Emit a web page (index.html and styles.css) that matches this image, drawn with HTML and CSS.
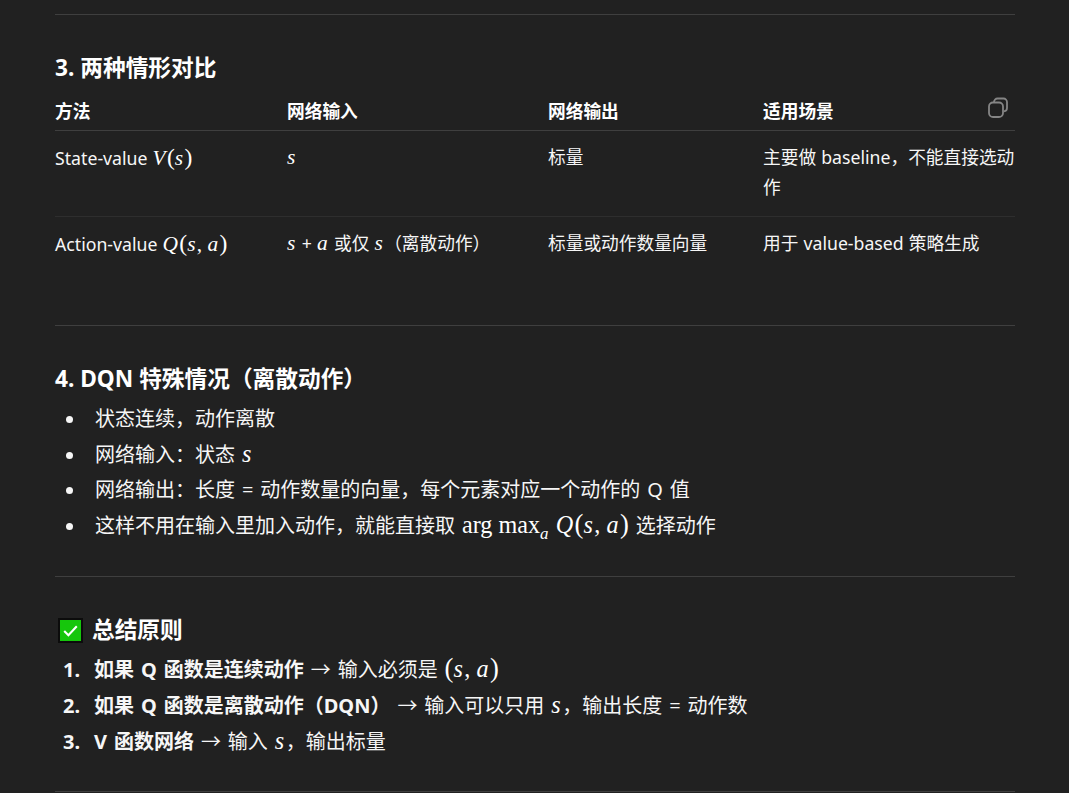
FILE: index.html
```html
<!DOCTYPE html>
<html lang="zh-CN">
<head>
<meta charset="utf-8">
<title>两种情形对比</title>
<link rel="stylesheet" href="styles.css">
</head>
<body>
<main class="doc">
  <hr class="rule first">
  <h3 class="title">3. 两种情形对比</h3>
  <div class="table-wrap">
    <table class="compare">
      <colgroup><col class="c1"><col class="c2"><col class="c3"><col class="c4"></colgroup>
      <thead>
        <tr><th>方法</th><th>网络输入</th><th>网络输出</th><th>适用场景</th></tr>
      </thead>
      <tbody>
        <tr>
          <td>State-value <span class="m"><i>V</i><span class="p">(</span><i>s</i><span class="p">)</span></span></td>
          <td><span class="m"><i>s</i></span></td>
          <td>标量</td>
          <td>主要做 baseline，不能直接选动作</td>
        </tr>
        <tr>
          <td>Action-value <span class="m"><i>Q</i><span class="p">(</span><i>s</i>, <i>a</i><span class="p">)</span></span></td>
          <td><span class="m"><i>s</i></span> + <span class="m"><i>a</i></span> 或仅 <span class="m"><i>s</i></span>（离散动作）</td>
          <td>标量或动作数量向量</td>
          <td>用于 value-based 策略生成</td>
        </tr>
      </tbody>
    </table>
    <svg class="copy" viewBox="0 0 22 22" aria-hidden="true">
      <path d="M7 5.500V5a3.500 3.500 0 0 1 3.500-3.500h6A3.500 3.500 0 0 1 20 5v6a3.500 3.500 0 0 1-3 3.460"/>
      <rect x="2" y="5.500" width="14" height="14.500" rx="4"/>
    </svg>
  </div>
  <hr class="rule after-table">
  <h3 class="title">4. DQN 特殊情况（离散动作）</h3>
  <ul class="list bullets">
    <li>状态连续，动作离散</li>
    <li>网络输入：状态 <span class="m"><i>s</i></span></li>
    <li>网络输出：长度 = 动作数量的向量，每个元素对应一个动作的 Q 值</li>
    <li>这样不用在输入里加入动作，就能直接取 <span class="m">arg max<sub><i>a</i></sub> <i>Q</i><span class="p">(</span><i>s</i>, <i>a</i><span class="p">)</span></span> 选择动作</li>
  </ul>
  <hr class="rule after-list">
  <h3 class="title check-title">
    <svg class="check" viewBox="0 0 22 22" aria-hidden="true">
      <rect width="22" height="22" fill="#16c60c"/>
      <path d="M5 11.500l4 4 8-8.500" fill="none" stroke="#fff" stroke-width="2"/>
    </svg>
    总结原则
  </h3>
  <ol class="list numbers">
    <li><b>如果 Q 函数是连续动作</b> → 输入必须是 <span class="m"><span class="p">(</span><i>s</i>, <i>a</i><span class="p">)</span></span></li>
    <li><b>如果 Q 函数是离散动作（DQN）</b> → 输入可以只用 <span class="m"><i>s</i></span>，输出长度 = 动作数</li>
    <li><b>V 函数网络</b> → 输入 <span class="m"><i>s</i></span>，输出标量</li>
  </ol>
  <hr class="rule after-list-2">
</main>
</body>
</html>
```
FILE: styles.css
```css
html, body {
  margin: 0;
  height: 793px;
  overflow: hidden;
  background: #212121;
}
body {
  color: #f6f6f6;
  font-family: "Noto Sans", "Noto Sans CJK SC", sans-serif;
  font-size: 20px;
  line-height: 35px;
}
.doc {
  width: 960px;
  margin-left: 55px;
  padding-top: 14px;
}
.rule {
  height: 1px;
  border: 0;
  margin: 0;
  background: #3f3f3f;
}
.title {
  margin: 0;
  font-size: 22.700px;
  line-height: 32px;
  font-weight: 700;
  color: #fff;
}
.first + .title { margin-top: 37px; }
.table-wrap {
  position: relative;
  margin-top: 12px;
}
.compare {
  width: 960px;
  table-layout: fixed;
  border-collapse: collapse;
  font-size: 17.700px;
  line-height: 30px;
  word-spacing: 0.500px;
}
.c1 { width: 232px; }
.c2 { width: 261px; }
.c3 { width: 215px; }
.c4 { width: 252px; }
.compare th {
  padding: 0 0 4px;
  height: 26px;
  text-align: left;
  font-weight: 700;
  color: #fff;
  border-bottom: 1px solid #3f3f3f;
}
.compare td {
  padding: 11px 0 14px;
  vertical-align: top;
}
.compare tbody tr:first-child td { border-bottom: 1px solid #2e2e2e; }
.copy {
  position: absolute;
  top: 1px;
  right: 6px;
  width: 22px;
  height: 22px;
  fill: none;
  stroke: #858585;
  stroke-width: 1.800;
}
.after-table { margin-top: 52px; }
.after-table + .title { margin-top: 37px; }
.list {
  margin: 6px 0 0;
  list-style: none;
  word-spacing: 1.750px;
}
.bullets { padding-left: 40px; }
.bullets li::before {
  content: "";
  display: inline-block;
  width: 7px;
  height: 7px;
  margin: 0 22px 0 -29px;
  border-radius: 50%;
  background: #f6f6f6;
  vertical-align: 3px;
}
.numbers {
  padding-left: 39px;
  counter-reset: step;
}
.numbers li { counter-increment: step; }
.numbers li::before {
  content: counter(step) ".";
  display: inline-block;
  width: 31px;
  margin-left: -31px;
  font-weight: 700;
}
.after-list { margin-top: 33px; }
.after-list + .title { margin-top: 37px; }
.check-title {
  display: flex;
  align-items: center;
  gap: 10px;
  padding-left: 4px;
}
.check {
  width: 23px;
  height: 23px;
  outline: 2px solid #0c0c0c;
  outline-offset: -1px;
}
.numbers { margin-top: 5px; }
.after-list-2 { margin-top: 32px; }
b { font-weight: 700; }
.m {
  font-family: "Liberation Serif", "DejaVu Serif", serif;
  font-size: 1.210em;
  color: #fff;
  word-spacing: 0;
}
.m i { font-style: italic; letter-spacing: 0.060em; }
.m .p { font-size: 1.100em; font-weight: 400; }
.m sub { font-size: 0.700em; line-height: 0; }
```
